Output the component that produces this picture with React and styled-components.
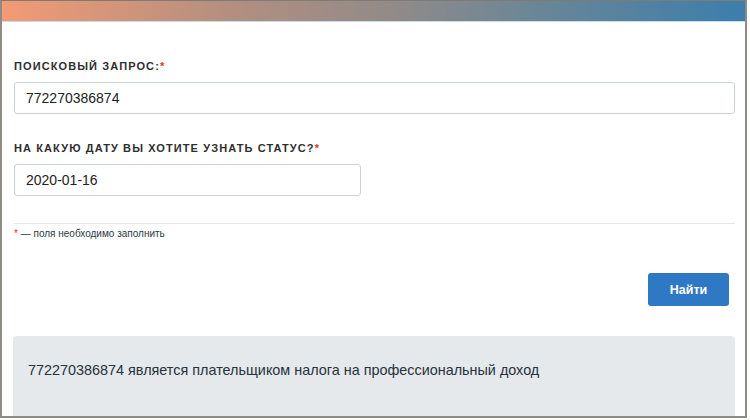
import React from 'react';
import styled, { createGlobalStyle } from 'styled-components';

const GlobalStyle = createGlobalStyle`
  * {
    box-sizing: border-box;
  }
  body {
    margin: 0;
    background: #ffffff;
    font-family: 'Liberation Sans', Arial, sans-serif;
  }
`;

function Field({ label, value, width }) {
  return (
    <StField>
      <StLabel>
        {label}
        <StRequired>*</StRequired>
      </StLabel>
      <StInput defaultValue={value} $width={width} />
    </StField>
  );
}

function App() {
  return (
    <>
      <GlobalStyle />
      <StFrame>
        <StBar />
        <StContent>
          <Field label="Поисковый запрос:" value="772270386874" />
          <Field label="На какую дату вы хотите узнать статус?" value="2020-01-16" width="347px" />
          <StDivider />
          <StNote>
            <StRequired>*</StRequired> — поля необходимо заполнить
          </StNote>
          <StActions>
            <StButton type="button">Найти</StButton>
          </StActions>
          <StResult>772270386874 является плательщиком налога на профессиональный доход</StResult>
        </StContent>
      </StFrame>
    </>
  );
}

export default App;

const StFrame = styled.div`
  width: 747px;
  height: 418px;
  border: 2px solid #8e8a84;
  border-top: 1px solid #7f7a74;
  display: flex;
  flex-direction: column;
  overflow: hidden;
`;

const StBar = styled.div`
  height: 21px;
  flex-shrink: 0;
  background: linear-gradient(90deg, #f29b74 0%, #b48f80 30%, #928b88 52%, #6a8696 72%, #3b7ead 100%);
  border-bottom: 1px solid #c9dbe8;
`;

const StContent = styled.div`
  flex: 1;
  padding: 37px 10px 0 12px;
  display: flex;
  flex-direction: column;
`;

const StField = styled.div`
  display: flex;
  flex-direction: column;
  margin-bottom: 27px;

  & + & {
    margin-bottom: 0;
  }
`;

const StLabel = styled.label`
  font-size: 11px;
  line-height: 14px;
  font-weight: bold;
  text-transform: uppercase;
  letter-spacing: 1.1px;
  color: #2e2e2e;
  margin-bottom: 9px;
`;

const StRequired = styled.span`
  color: #e0352b;
`;

const StInput = styled.input`
  width: ${(p) => p.$width || '100%'};
  height: 32px;
  border: 1px solid #c9d3dc;
  border-radius: 3px;
  padding: 0 11px;
  font-family: 'Liberation Sans', Arial, sans-serif;
  font-size: 14px;
  color: #222;
  background: #fff;
  outline: none;
`;

const StDivider = styled.div`
  height: 1px;
  background: #e6e8ea;
  margin-top: 27px;
`;

const StNote = styled.div`
  margin-top: 4px;
  font-size: 10px;
  line-height: 12px;
  color: #2b3a44;
`;

const StActions = styled.div`
  display: flex;
  justify-content: flex-end;
  margin-top: 33px;
  padding-right: 6px;
`;

const StButton = styled.button`
  width: 81px;
  height: 33px;
  border: none;
  border-radius: 3px;
  background: #2f78c3;
  color: #ffffff;
  font-family: 'Liberation Sans', Arial, sans-serif;
  font-size: 12.5px;
  font-weight: bold;
  cursor: pointer;
`;

const StResult = styled.div`
  margin: 30px 0 0 -1px;
  flex: 1;
  background: #e5e9ec;
  border-radius: 4px 4px 0 0;
  padding: 24px 15px 0;
  font-size: 14.4px;
  line-height: 20px;
  color: #26323c;
`;
